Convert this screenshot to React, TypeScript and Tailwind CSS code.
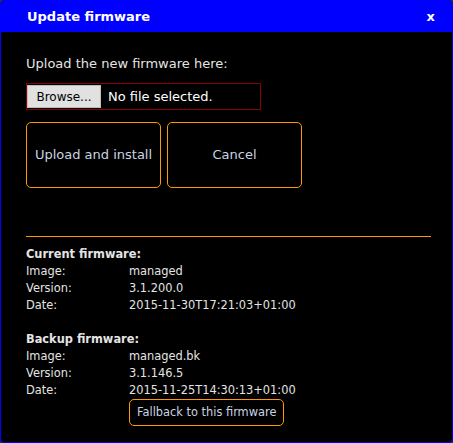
const current = [
  ['Image:', 'managed'],
  ['Version:', '3.1.200.0'],
  ['Date:', '2015-11-30T17:21:03+01:00'],
];

const backup = [
  ['Image:', 'managed.bk'],
  ['Version:', '3.1.146.5'],
  ['Date:', '2015-11-25T14:30:13+01:00'],
];

function InfoRows({ rows }: { rows: string[][] }) {
  return (
    <>
      {rows.map(([label, value]) => (
        <div key={label} className="flex h-[17px] items-center">
          <span className="w-[103px]">{label}</span>
          <span>{value}</span>
        </div>
      ))}
    </>
  );
}

export default function App() {
  return (
    <div className="h-[443px] w-[453px] bg-[#303030] font-['DejaVu_Sans',sans-serif]">
      <div className="flex h-full w-full flex-col overflow-hidden rounded-[4px] border border-[#0000ff] bg-black">
        <div className="flex h-[31px] shrink-0 items-center justify-between bg-[#0000ff] pl-[26px] pr-[17px] text-white">
          <span className="text-[13px] font-bold">Update firmware</span>
          <span className="text-[13px] font-bold">x</span>
        </div>

        <div className="flex flex-col px-[25px] text-[#e4e4e4]">
          <p className="mt-[23px] text-[13px] leading-[17px]">Upload the new firmware here:</p>

          <div className="mt-[11px] flex h-[27px] w-[235px] items-center border border-[#8b0000] text-[13px]">
            <span className="flex h-[23px] w-[74px] items-center justify-center border border-[#bdbdbd] bg-[#e1e1e1] text-[12px] text-black">
              Browse...
            </span>
            <span className="ml-[7px] text-white">No file selected.</span>
          </div>

          <div className="mt-[12px] flex gap-[6px] text-[13px] text-[#c8d4e0]">
            <button className="h-[66px] w-[135px] rounded-[5px] border border-[#ff9900]">
              Upload and install
            </button>
            <button className="h-[66px] w-[135px] rounded-[5px] border border-[#ff9900]">
              Cancel
            </button>
          </div>

          <div className="mt-[48px] h-px w-[405px] bg-[#ff9900]" />

          <div className="mt-[9px] text-[11.4px]">
            <div className="flex h-[17px] items-center font-bold">Current firmware:</div>
            <InfoRows rows={current} />

            <div className="mt-[17px] flex h-[17px] items-center font-bold">Backup firmware:</div>
            <InfoRows rows={backup} />

            <button className="ml-[103px] mt-0 h-[27px] rounded-[5px] border border-[#ff9900] px-[7px] text-[11.4px] text-[#c8d4e0]">
              Fallback to this firmware
            </button>
          </div>
        </div>
      </div>
    </div>
  );
}
